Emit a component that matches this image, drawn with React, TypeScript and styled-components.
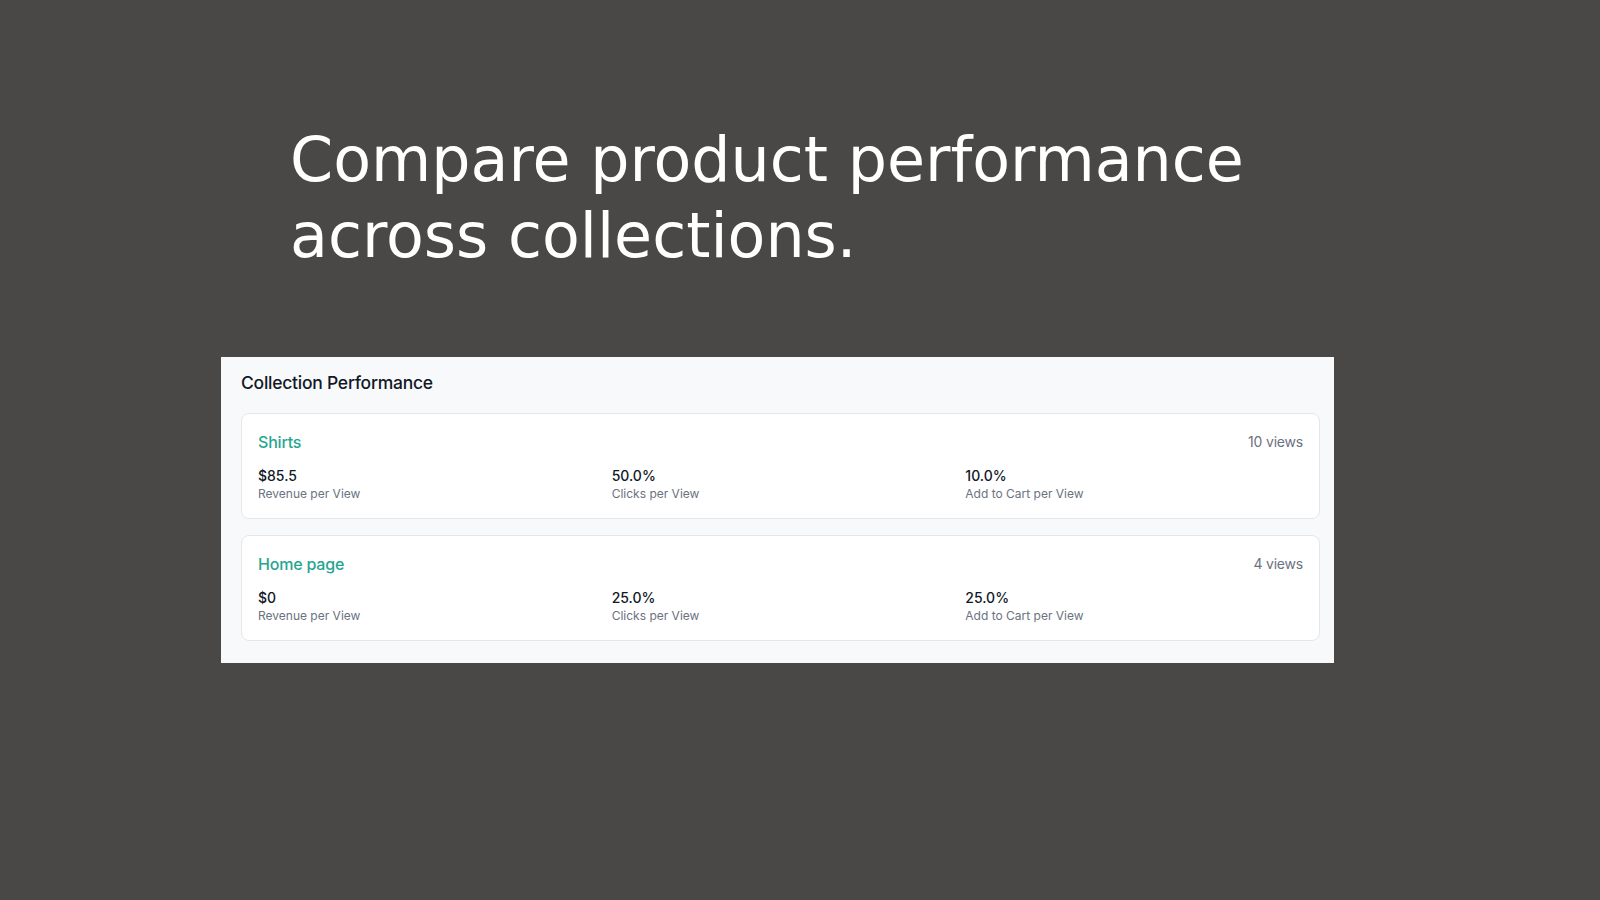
import React from "react";
import styled, { createGlobalStyle } from "styled-components";

const GlobalStyle = createGlobalStyle`
  html, body {
    margin: 0;
    padding: 0;
    background: #4a4846;
  }
  body {
    width: 1600px;
    height: 900px;
    overflow: hidden;
  }
`;

const Page = styled.div`
  display: flex;
  flex-direction: column;
  align-items: flex-start;
  padding: 122px 0 0 221px;
  box-sizing: border-box;
  min-height: 900px;
`;

const Heading = styled.h1`
  margin: 0 0 0 69px;
  max-width: 1000px;
  font-family: "DejaVu Sans", Verdana, sans-serif;
  font-weight: 400;
  font-size: 61.85px;
  line-height: 76px;
  color: #ffffff;
`;

const Panel = styled.section`
  margin-top: 83px;
  width: 1113px;
  box-sizing: border-box;
  padding: 12px 14px 22px 20px;
  background: #f8f9fa;
  font-family: Inter, "Noto Sans", sans-serif;
  display: flex;
  flex-direction: column;
`;

const PanelTitle = styled.h2`
  margin: 0 0 16px 0;
  font-size: 17.5px;
  letter-spacing: -0.25px;
  line-height: 28px;
  font-weight: 500;
  color: #111827;
`;

const CardList = styled.div`
  display: flex;
  flex-direction: column;
  gap: 16px;
`;

const Card = styled.div`
  background: #ffffff;
  border: 1px solid #e5e7eb;
  border-radius: 8px;
  padding: 16px;
`;

const CardHeader = styled.div`
  display: flex;
  align-items: center;
  justify-content: space-between;
  height: 24px;
  margin-bottom: 12px;
`;

const CollectionName = styled.span`
  font-size: 16px;
  letter-spacing: -0.2px;
  line-height: 24px;
  font-weight: 500;
  color: #27a590;
`;

const Views = styled.span`
  font-size: 14px;
  letter-spacing: -0.2px;
  line-height: 20px;
  color: #6b7280;
`;

const Metrics = styled.div`
  display: grid;
  grid-template-columns: repeat(3, 1fr);
  gap: 16px;
`;

const Metric = styled.div`
  display: flex;
  flex-direction: column;
`;

const Value = styled.span`
  font-size: 14px;
  line-height: 20px;
  font-weight: 500;
  color: #111827;
`;

const Label = styled.span`
  font-size: 12px;
  line-height: 16px;
  color: #6b7280;
`;

type Row = {
  name: string;
  views: string;
  metrics: { value: string; label: string }[];
};

const rows: Row[] = [
  {
    name: "Shirts",
    views: "10 views",
    metrics: [
      { value: "$85.5", label: "Revenue per View" },
      { value: "50.0%", label: "Clicks per View" },
      { value: "10.0%", label: "Add to Cart per View" },
    ],
  },
  {
    name: "Home page",
    views: "4 views",
    metrics: [
      { value: "$0", label: "Revenue per View" },
      { value: "25.0%", label: "Clicks per View" },
      { value: "25.0%", label: "Add to Cart per View" },
    ],
  },
];

export default function App() {
  return (
    <>
      <GlobalStyle />
      <Page>
        <Heading>Compare product performance across collections.</Heading>
        <Panel>
          <PanelTitle>Collection Performance</PanelTitle>
          <CardList>
            {rows.map((r) => (
              <Card key={r.name}>
                <CardHeader>
                  <CollectionName>{r.name}</CollectionName>
                  <Views>{r.views}</Views>
                </CardHeader>
                <Metrics>
                  {r.metrics.map((m) => (
                    <Metric key={m.label}>
                      <Value>{m.value}</Value>
                      <Label>{m.label}</Label>
                    </Metric>
                  ))}
                </Metrics>
              </Card>
            ))}
          </CardList>
        </Panel>
      </Page>
    </>
  );
}
